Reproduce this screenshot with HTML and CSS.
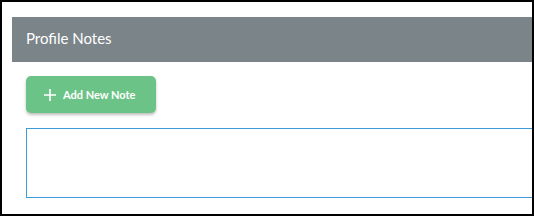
FILE: index.html
```html
<!DOCTYPE html>
<html lang="en">
<head>
  <meta charset="UTF-8" />
  <title>Profile Notes</title>
  <link rel="stylesheet" href="styles.css">
</head>
<body>
  <div class="frame">
    <div class="panel">
      <!-- ======= HEADER ======= -->
      <div class="panel-header">Profile Notes</div>

      <div class="panel-body">
        <button class="btn-add" type="button">
          <svg class="plus" viewBox="0 0 12 12" width="12" height="12">
            <path d="M6 0v12M0 6h12" stroke="#fff" stroke-width="1.6" fill="none"/>
          </svg>
          <span>Add New Note</span>
        </button>

        <div class="note-box"></div>
      </div>
    </div>
  </div>
</body>
</html>
```

FILE: styles.css
```css
body {
  margin: 0;
  padding: 0;
  background: #fff;
  font-family: Lato, 'Open Sans', sans-serif;
}

.frame {
  width: 534px;
  height: 216px;
  box-sizing: border-box;
  border: 2px solid #000;
  overflow: hidden;
  padding: 15px 0 0 10px;
}

.panel {
  width: 560px;
}

/* ===== HEADER ===== */
.panel-header {
  background: #7a8489;
  color: #fff;
  height: 45px;
  box-sizing: border-box;
  display: flex;
  align-items: center;
  padding: 0 0 3px 14px;
  font-size: 15px;
}

.panel-body {
  padding: 14px 0 0 14px;
  display: flex;
  flex-direction: column;
  align-items: flex-start;
}

.btn-add {
  width: 130px;
  height: 37px;
  background: #6cc387;
  border: none;
  border-radius: 5px;
  box-shadow: 0 2px 3px rgba(0, 0, 0, 0.25);
  color: #fff;
  font-family: Lato, sans-serif;
  font-weight: bold;
  font-size: 11px;
  display: flex;
  align-items: center;
  gap: 7px;
  padding: 0 0 0 18px;
  cursor: pointer;
}

.plus {
  display: block;
}

.note-box {
  margin-top: 15px;
  width: 100%;
  height: 70px;
  box-sizing: border-box;
  border: 1px solid #3d9bd8;
}
```
